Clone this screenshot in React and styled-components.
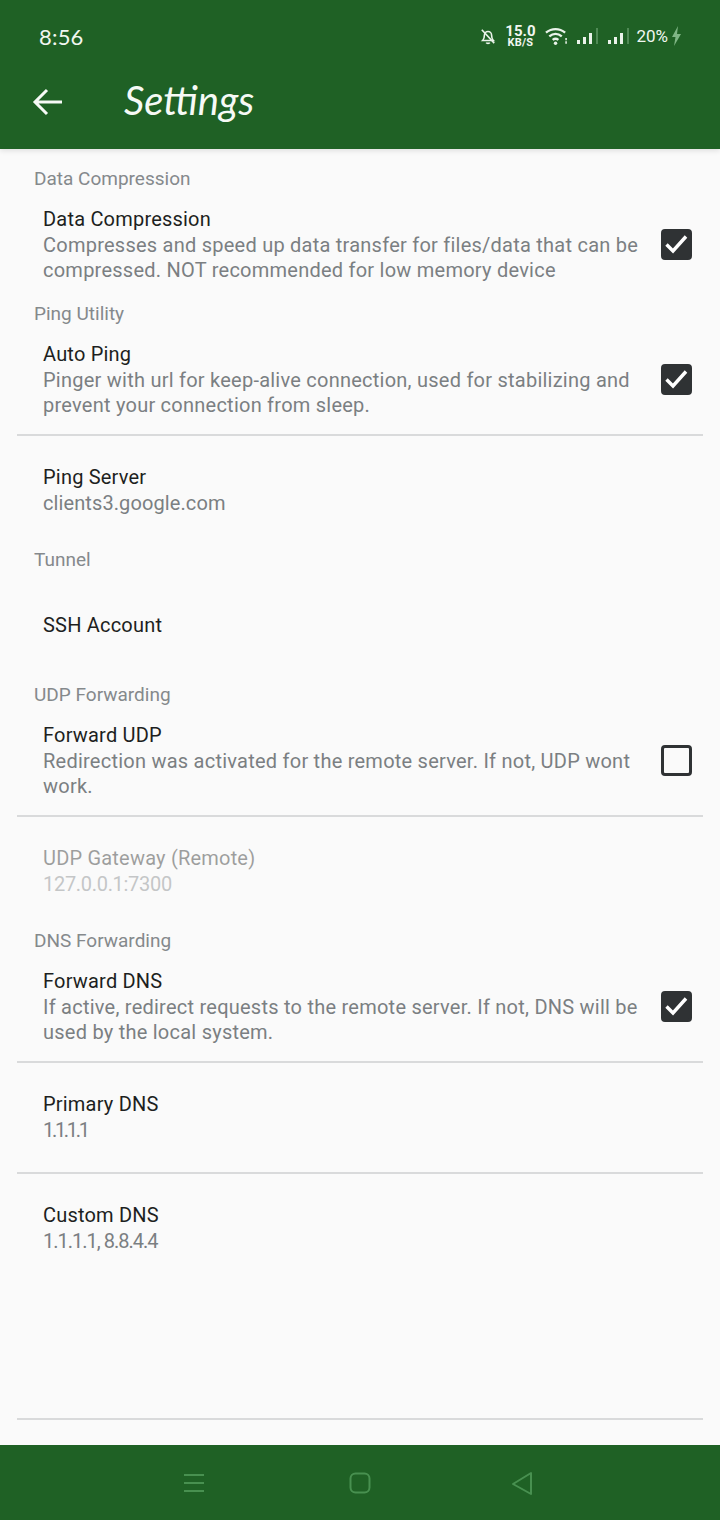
import React from "react";
import styled, { createGlobalStyle } from "styled-components";

const Global = createGlobalStyle`
  html, body { margin: 0; padding: 0; background: #fafafa; }
  #root { width: 720px; height: 1520px; }
  * { box-sizing: border-box; }
`;

const Page = styled.div`
  width: 720px;
  height: 1520px;
  display: flex;
  flex-direction: column;
  background: #fafafa;
  font-family: Roboto, "Noto Sans", sans-serif;
  overflow: hidden;
`;

const Header = styled.header`
  height: 149px;
  flex: none;
  background: #1f6125;
  color: #f1f7f1;
  box-shadow: 0 2px 5px rgba(0, 0, 0, 0.1);
  display: flex;
  flex-direction: column;
  position: relative;
`;

const StatusBar = styled.div`
  height: 72px;
  display: flex;
  align-items: center;
  justify-content: space-between;
  padding: 0 38px 0 39px;
`;

const Clock = styled.span`
  font-family: Lato, Roboto, sans-serif;
  font-size: 22px;
  letter-spacing: 0.2px;
`;

const StatusIcons = styled.div`
  display: flex;
  align-items: center;
  gap: 9px;
`;

const Speed = styled.div`
  display: flex;
  flex-direction: column;
  align-items: center;
  width: 30px;
  font-weight: 700;
  margin-right: 1px;
`;

const SpeedValue = styled.span`
  font-size: 15px;
  line-height: 13px;
`;

const SpeedUnit = styled.span`
  font-size: 11px;
  line-height: 10px;
  letter-spacing: 0.2px;
`;

const Battery = styled.span`
  font-size: 17px;
  margin: 0 -6px 0 -3px;
`;

const Toolbar = styled.div`
  flex: 1;
  display: flex;
  align-items: center;
  padding: 0 0 17px 32px;
`;

const Back = styled.svg`
  width: 32px;
  height: 28px;
  flex: none;
`;

const Title = styled.h1`
  margin: 0 0 4px 60px;
  font-family: Lato, sans-serif;
  font-style: italic;
  font-weight: 400;
  font-size: 40px;
  line-height: 46px;
  color: #f6faf6;
`;

const List = styled.main`
  flex: 1;
  padding-top: 15px;
  display: flex;
  flex-direction: column;
`;

const Category = styled.div`
  height: 30px;
  line-height: 30px;
  padding-left: 34px;
  font-size: 19px;
  color: #85898c;
`;

const Row = styled.div`
  display: flex;
  align-items: center;
  justify-content: space-between;
  padding: ${(p) => p.$top}px 28px ${(p) => p.$bottom}px 43px;
  opacity: ${(p) => (p.$disabled ? 0.42 : 1)};
`;

const RowText = styled.div`
  width: 600px;
`;

const RowTitle = styled.div`
  font-size: 20px;
  line-height: 27px;
  letter-spacing: 0.2px;
  color: #1d1f21;
`;

const Summary = styled.div`
  font-size: 20px;
  line-height: 25px;
  letter-spacing: ${(p) => p.$tracking}px;
  color: #7b7f82;
  white-space: nowrap;
`;

const Rule = styled.hr`
  flex: none;
  height: 2px;
  margin: 0 17px;
  border: 0;
  background: #d9dadb;
`;

const Spacer = styled.div`
  flex: 1;
`;

const Box = styled.div`
  width: 31px;
  height: 31px;
  flex: none;
  border-radius: 4px;
  border: 3px solid #2f3234;
  background: ${(p) => (p.$on ? "#2f3234" : "transparent")};
  display: flex;
  align-items: center;
  justify-content: center;
`;

const BottomGap = styled.div`
  height: 25px;
  flex: none;
`;

const NavBar = styled.nav`
  height: 75px;
  flex: none;
  background: #1f6125;
  display: grid;
  grid-template-columns: 166px 162px 24px;
  align-items: center;
  padding-left: 182px;
`;

const NavIcon = styled.svg`
  width: 24px;
  height: 24px;
  fill: none;
  stroke: #489050;
  stroke-width: 2;
`;

const Check = ({ on }) => (
  <Box $on={on}>
    {on && (
      <svg width="25" height="25" viewBox="0 0 25 25" fill="none">
        <path d="M2.500 12.500l6.500 6.500L22 4.500" stroke="#fff" strokeWidth="3.400" />
      </svg>
    )}
  </Box>
);

const Setting = ({ title, summary, checked, top = 12, bottom, disabled, tracking = 0.24 }) => (
  <Row $top={top} $bottom={bottom} $disabled={disabled}>
    <RowText>
      <RowTitle>{title}</RowTitle>
      {summary &&
        summary.map((s) => (
          <Summary key={s} $tracking={tracking}>
            {s}
          </Summary>
        ))}
    </RowText>
    {checked !== undefined && <Check on={checked} />}
  </Row>
);

const Signal = () => (
  <svg width="22" height="20" viewBox="0 0 22 20" fill="#eaf3ea">
    <rect x="0" y="14" width="3" height="4" />
    <rect x="6" y="11" width="3" height="7" />
    <rect x="12" y="7" width="3" height="11" />
    <rect x="19" y="2" width="2" height="16" fill="#4f8a55" />
  </svg>
);

export default function App() {
  return (
    <Page>
      <Global />
      <Header>
        <StatusBar>
          <Clock>8:56</Clock>
          <StatusIcons>
            <svg width="16" height="20" viewBox="0 0 18 20" fill="none" stroke="#eaf3ea" strokeWidth="1.800">
              <path d="M3 15c1.500-1.500 2-3 2-6a4 4 0 0 1 8 0c0 3 .5 4.500 2 6z" />
              <path d="M7 17.500c.5 1 3.500 1 4 0M2 3l14 15" />
            </svg>
            <Speed>
              <SpeedValue>15.0</SpeedValue>
              <SpeedUnit>KB/S</SpeedUnit>
            </Speed>
            <svg width="23" height="20" viewBox="0 0 24 20" fill="none" stroke="#eaf3ea" strokeWidth="2.400">
              <path d="M1 6.500c6-5 14-5 20 0M4.500 10.500c4-3.500 9-3.500 13 0M8 14c2-1.500 4-1.500 6 0" />
              <circle cx="11" cy="17.500" r="1.800" fill="#eaf3ea" stroke="none" />
              <path d="M22 12v2.500M22 15.500v2.500" strokeWidth="1.600" />
            </svg>
            <Signal />
            <Signal />
            <Battery>20%</Battery>
            <svg width="11" height="20" viewBox="0 0 11 20" fill="#7fb585">
              <path d="M7 0L1 11h3.500L3 20l7-12H6z" />
            </svg>
          </StatusIcons>
        </StatusBar>
        <Toolbar>
          <Back viewBox="0 0 32 28" fill="none" stroke="#f6faf6" strokeWidth="3">
            <path d="M30 14H4M15 2L3 14l12 12" />
          </Back>
          <Title>Settings</Title>
        </Toolbar>
      </Header>
      <List>
        <Category>Data Compression</Category>
        <Setting
          title="Data Compression"
          summary={["Compresses and speed up data transfer for files/data that can be", "compressed. NOT recommended for low memory device"]}
          checked
          bottom={16}
        />
        <Category>Ping Utility</Category>
        <Setting
          title="Auto Ping"
          summary={["Pinger with url for keep-alive connection, used for stabilizing and", "prevent your connection from sleep."]}
          checked
          bottom={16}
        />
        <Rule />
        <Setting title="Ping Server" summary={["clients3.google.com"]} top={28} bottom={29} tracking={0.1} />
        <Category>Tunnel</Category>
        <Setting title="SSH Account" top={37} bottom={41} />
        <Category>UDP Forwarding</Category>
        <Setting
          title="Forward UDP"
          summary={["Redirection was activated for the remote server. If not, UDP wont", "work."]}
          checked={false}
          bottom={16}
        />
        <Rule />
        <Setting title="UDP Gateway (Remote)" summary={["127.0.0.1:7300"]} top={28} bottom={29} disabled tracking={-0.3} />
        <Category>DNS Forwarding</Category>
        <Setting
          title="Forward DNS"
          summary={["If active, redirect requests to the remote server. If not, DNS will be", "used by the local system."]}
          checked
          bottom={16}
        />
        <Rule />
        <Setting title="Primary DNS" summary={["1.1.1.1"]} top={28} bottom={29} tracking={-2.3} />
        <Rule />
        <Setting title="Custom DNS" summary={["1.1.1.1, 8.8.4.4"]} top={28} bottom={29} tracking={-1} />
        <Spacer />
        <Rule />
        <BottomGap />
      </List>
      <NavBar>
        <NavIcon viewBox="0 0 24 24">
          <path d="M2 4h20M2 12h20M2 20h20" />
        </NavIcon>
        <NavIcon viewBox="0 0 24 24">
          <rect x="2.500" y="2.500" width="19" height="19" rx="5" />
        </NavIcon>
        <NavIcon viewBox="0 0 24 24">
          <path d="M21 2v21L3 13z" strokeLinejoin="round" />
        </NavIcon>
      </NavBar>
    </Page>
  );
}
